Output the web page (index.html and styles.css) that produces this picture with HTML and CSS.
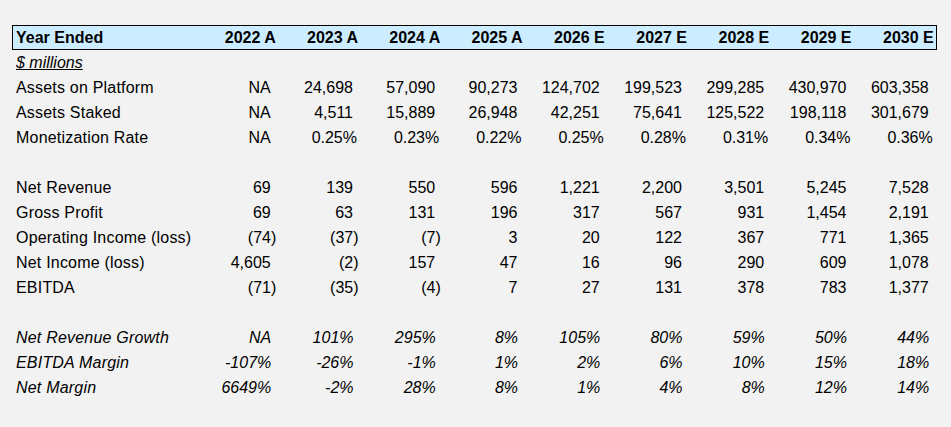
FILE: index.html
```html
<!DOCTYPE html>
<html lang="en">
<head>
<meta charset="utf-8">
<title>Year Ended</title>
<link rel="stylesheet" href="styles.css">
</head>
<body>
<div class="sheet">
  <div class="row head">
    <div class="lbl">Year Ended</div>
    <div class="c">2022 A</div><div class="c">2023 A</div><div class="c">2024 A</div><div class="c">2025 A</div>
    <div class="c">2026 E</div><div class="c">2027 E</div><div class="c">2028 E</div><div class="c">2029 E</div><div class="c">2030 E</div>
  </div>
  <div class="row"><div class="lbl unit">$ millions</div></div>
  <div class="row">
    <div class="lbl">Assets on Platform</div>
    <div class="c n">NA</div><div class="c n">24,698</div><div class="c n">57,090</div><div class="c n">90,273</div><div class="c n">124,702</div><div class="c n">199,523</div><div class="c n">299,285</div><div class="c n">430,970</div><div class="c n">603,358</div>
  </div>
  <div class="row">
    <div class="lbl">Assets Staked</div>
    <div class="c n">NA</div><div class="c n">4,511</div><div class="c n">15,889</div><div class="c n">26,948</div><div class="c n">42,251</div><div class="c n">75,641</div><div class="c n">125,522</div><div class="c n">198,118</div><div class="c n">301,679</div>
  </div>
  <div class="row">
    <div class="lbl">Monetization Rate</div>
    <div class="c n">NA</div><div class="c p">0.25%</div><div class="c p">0.23%</div><div class="c p">0.22%</div><div class="c p">0.25%</div><div class="c p">0.28%</div><div class="c p">0.31%</div><div class="c p">0.34%</div><div class="c p">0.36%</div>
  </div>
  <div class="row"></div>
  <div class="row">
    <div class="lbl">Net Revenue</div>
    <div class="c n">69</div><div class="c n">139</div><div class="c n">550</div><div class="c n">596</div><div class="c n">1,221</div><div class="c n">2,200</div><div class="c n">3,501</div><div class="c n">5,245</div><div class="c n">7,528</div>
  </div>
  <div class="row">
    <div class="lbl">Gross Profit</div>
    <div class="c n">69</div><div class="c n">63</div><div class="c n">131</div><div class="c n">196</div><div class="c n">317</div><div class="c n">567</div><div class="c n">931</div><div class="c n">1,454</div><div class="c n">2,191</div>
  </div>
  <div class="row">
    <div class="lbl">Operating Income (loss)</div>
    <div class="c">(74)</div><div class="c">(37)</div><div class="c">(7)</div><div class="c n">3</div><div class="c n">20</div><div class="c n">122</div><div class="c n">367</div><div class="c n">771</div><div class="c n">1,365</div>
  </div>
  <div class="row">
    <div class="lbl">Net Income (loss)</div>
    <div class="c n">4,605</div><div class="c">(2)</div><div class="c n">157</div><div class="c n">47</div><div class="c n">16</div><div class="c n">96</div><div class="c n">290</div><div class="c n">609</div><div class="c n">1,078</div>
  </div>
  <div class="row">
    <div class="lbl">EBITDA</div>
    <div class="c">(71)</div><div class="c">(35)</div><div class="c">(4)</div><div class="c n">7</div><div class="c n">27</div><div class="c n">131</div><div class="c n">378</div><div class="c n">783</div><div class="c n">1,377</div>
  </div>
  <div class="row"></div>
  <div class="row it">
    <div class="lbl">Net Revenue Growth</div>
    <div class="c n">NA</div><div class="c n">101%</div><div class="c n">295%</div><div class="c n">8%</div><div class="c n">105%</div><div class="c n">80%</div><div class="c n">59%</div><div class="c n">50%</div><div class="c n">44%</div>
  </div>
  <div class="row it">
    <div class="lbl">EBITDA Margin</div>
    <div class="c n">-107%</div><div class="c n">-26%</div><div class="c n">-1%</div><div class="c n">1%</div><div class="c n">2%</div><div class="c n">6%</div><div class="c n">10%</div><div class="c n">15%</div><div class="c n">18%</div>
  </div>
  <div class="row it">
    <div class="lbl">Net Margin</div>
    <div class="c n">6649%</div><div class="c n">-2%</div><div class="c n">28%</div><div class="c n">8%</div><div class="c n">1%</div><div class="c n">4%</div><div class="c n">8%</div><div class="c n">12%</div><div class="c n">14%</div>
  </div>
</div>
</body>
</html>
```

FILE: styles.css
```css
html, body {
  margin: 0;
  padding: 0;
  background: #f2f2f2;
}

body {
  width: 951px;
  height: 427px;
  overflow: hidden;
  font-family: "Liberation Sans", Arial, sans-serif;
  font-size: 16px;
  color: #000;
}

.sheet {
  padding: 25px 0 0 12px;
  width: 925.25px;
}

.row {
  display: grid;
  grid-template-columns: 183px repeat(9, 82.25px);
  height: 25px;
  line-height: 25px;
  padding: 0 1px;
  white-space: nowrap;
}

.row.head {
  height: 23px;
  line-height: 23px;
  padding: 0;
  border: 1px solid #000;
  background: #ccecff;
  font-weight: bold;
}

.lbl {
  padding-left: 3px;
  letter-spacing: 0.2px;
}

.head .lbl {
  letter-spacing: 0;
}

.unit {
  font-style: italic;
  text-decoration: underline;
  letter-spacing: 0;
}

.c {
  text-align: right;
  padding-right: 2px;
}

.head .c {
  padding-right: 2.5px;
}

.c.n {
  padding-right: 7.5px;
}

.c.p {
  padding-right: 3.5px;
}

.it {
  font-style: italic;
}

.it .c.n {
  padding-right: 7px;
}
```
